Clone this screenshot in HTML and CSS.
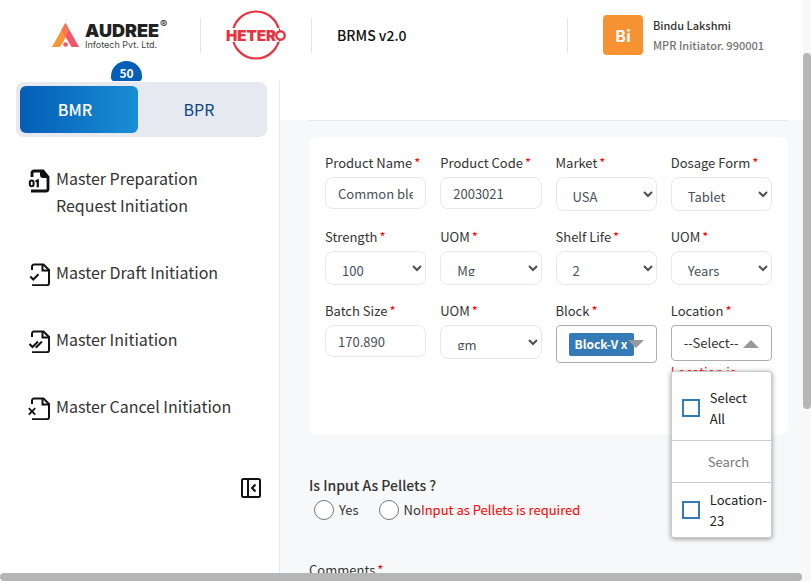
FILE: index.html
```html
<!DOCTYPE html>
<html lang="en">
<head>
<meta charset="utf-8">
<title>BRMS v2.0</title>
<link rel="stylesheet" href="styles.css">
</head>
<body>
<svg class="defs" aria-hidden="true">
  <symbol id="page" viewBox="0 0 24 24">
    <path d="M4 8V4.500a2 2 0 0 1 2-2h9.500L21 8v13.200a2 2 0 0 1-2 2H4" fill="none" stroke="#111" stroke-width="2"/>
    <path d="M14.500 3v5.500H21" fill="none" stroke="#111" stroke-width="2"/>
  </symbol>
</svg>
<div class="app">
  <header class="header">
    <div class="audree">
      <svg class="audree-mark" width="28" height="24" viewBox="0 0 28 24" aria-hidden="true">
        <path d="M13.500 0 0 24h8l9-15z" fill="#f79433"/>
        <path d="M13.500 0 27 24h-7.500L9.500 7z" fill="#f2566b"/>
        <path d="M13.500 0 9.500 7 13 13 17 8z" fill="#f57850"/>
        <circle cx="13.500" cy="21.500" r="2.300" fill="#f2566b"/>
      </svg>
      <div class="audree-words">
        <div class="audree-name">AUDREE<sup>®</sup></div>
        <div class="audree-sub">Infotech Pvt. Ltd.</div>
      </div>
    </div>
    <div class="hetero">
      <svg width="62" height="52" viewBox="0 0 62 52" role="img" aria-label="Hetero">
        <circle cx="31" cy="26" r="23.500" fill="none" stroke="#e8323e" stroke-width="2.200"/>
        <path d="M0 19h54v14H0z" fill="#fff"/>
        <text x="1" y="31.500" class="hetero-text">HETER</text>
        <circle cx="55.500" cy="26.500" r="4.200" fill="#fff" stroke="#e8323e" stroke-width="2.400"/>
      </svg>
    </div>
    <div class="title">BRMS v2.0</div>
    <div class="user">
      <div class="avatar">Bi</div>
      <div>
        <div class="user-name">Bindu Lakshmi</div>
        <div class="user-role">MPR Initiator. 990001</div>
      </div>
    </div>
  </header>

  <div class="body">
    <aside class="sidebar">
      <div class="tabs">
        <button class="tab active" type="button">BMR</button>
        <button class="tab" type="button">BPR</button>
        <span class="badge">50</span>
      </div>
      <nav class="nav">
        <a href="#preparation">
          <svg viewBox="0 0 24 24" aria-hidden="true">
            <path d="M4 9V5a2 2 0 0 1 2-2h9l5 6v12a2 2 0 0 1-2 2H3" fill="none" stroke="#111" stroke-width="2.800"/>
            <path d="M12 2h4l5.500 8H15a3 3 0 0 1-3-3z" fill="#111"/>
            <rect x="1.800" y="12.600" width="3.800" height="5.600" rx="1.900" fill="none" stroke="#111" stroke-width="2"/>
            <path d="M7.500 13.500 9.800 12.500V19.300" fill="none" stroke="#111" stroke-width="2.200"/>
          </svg>
          <span>Master Preparation Request Initiation</span>
        </a>
        <a href="#draft">
          <svg viewBox="0 0 24 24" aria-hidden="true"><use href="#page"/><path d="M2.300 14.500l3 3 5.200-5.200" fill="none" stroke="#111" stroke-width="2"/></svg>
          <span>Master Draft Initiation</span>
        </a>
        <a href="#initiation">
          <svg viewBox="0 0 24 24" aria-hidden="true"><use href="#page"/><path d="M1.500 15l3 3 5.500-5.500M7.500 18l1 0 5.500-5.500" fill="none" stroke="#111" stroke-width="2"/></svg>
          <span>Master Initiation</span>
        </a>
        <a href="#cancel">
          <svg viewBox="0 0 24 24" aria-hidden="true"><use href="#page"/><path d="M.8 12.200l6.400 6.400M7.200 12.200.8 18.600" fill="none" stroke="#111" stroke-width="1.800"/></svg>
          <span>Master Cancel Initiation</span>
        </a>
      </nav>
      <button class="collapse" type="button" aria-label="Collapse menu">
        <svg width="20" height="20" viewBox="0 0 20 20" fill="none" stroke="#111" stroke-width="2" aria-hidden="true"><rect x="1" y="1" width="18" height="18" rx="1.500"/><path d="M7 1v18M14.500 6.500 11 10l3.500 3.500"/></svg>
      </button>
    </aside>

    <main class="main">
      <div class="toolbar"></div>
      <form class="form">
        <div class="card">
          <div class="field"><label for="name">Product Name<i>*</i></label><input id="name" type="text" value="Common blend"></div>
          <div class="field"><label for="code">Product Code<i>*</i></label><input id="code" type="text" value="2003021"></div>
          <div class="field"><label for="market">Market<i>*</i></label><select id="market"><option>USA</option></select></div>
          <div class="field"><label for="dosage">Dosage Form<i>*</i></label><select id="dosage"><option>Tablet</option></select></div>
          <div class="field"><label for="strength">Strength<i>*</i></label><select id="strength"><option>100</option></select></div>
          <div class="field"><label for="uom1">UOM<i>*</i></label><select id="uom1"><option>Mg</option></select></div>
          <div class="field"><label for="shelf">Shelf Life<i>*</i></label><select id="shelf"><option>2</option></select></div>
          <div class="field"><label for="uom2">UOM<i>*</i></label><select id="uom2"><option>Years</option></select></div>
          <div class="field"><label for="batch">Batch Size<i>*</i></label><input id="batch" type="text" value="170.890"></div>
          <div class="field"><label for="uom3">UOM<i>*</i></label><select id="uom3"><option>gm</option></select></div>
          <div class="field">
            <label for="block">Block<i>*</i></label>
            <button id="block" class="multi tall" type="button"><span class="chip">Block-V x</span><span class="caret down"></span></button>
          </div>
          <div class="field">
            <label for="location">Location<i>*</i></label>
            <div class="picker">
              <button id="location" class="multi" type="button">--Select--<span class="caret up"></span></button>
              <div class="menu">
                <label class="option all"><input type="checkbox"><span>Select All</span></label>
                <input class="search" type="text" placeholder="Search" aria-label="Search">
                <label class="option"><input type="checkbox"><span>Location-23</span></label>
              </div>
            </div>
            <div class="error">Location is required</div>
          </div>
        </div>

        <fieldset class="pellets">
          <legend>Is Input As Pellets ?</legend>
          <div class="choices">
            <label><input type="radio" name="pellets">Yes</label>
            <label><input type="radio" name="pellets">No</label><span class="error">Input as Pellets is required</span>
          </div>
        </fieldset>
        <div class="comments"><label for="comments">Comments<i>*</i></label><textarea id="comments"></textarea></div>
      </form>
    </main>
  </div>
  <div class="vbar"></div>
  <div class="hbar"></div>
</div>
</body>
</html>
```
FILE: styles.css
```css
* { box-sizing: border-box; }
body {
  margin: 0;
  font-family: "Noto Sans CJK JP", "Noto Sans", sans-serif;
  font-size: 13px;
  line-height: 20px;
  color: #333;
}
button, input, select, textarea { font: inherit; color: inherit; }
.defs { position: absolute; width: 0; height: 0; }
.app {
  position: relative;
  display: flex;
  flex-direction: column;
  height: 100vh;
  overflow: hidden;
  background: #f7f8fa;
}

/* Header */
.header {
  display: flex;
  align-items: center;
  height: 81px;
  padding: 0 39px 11px 52px;
  margin-right: 8px;
  background: #fff;
}
.audree { display: flex; align-items: center; gap: 5px; width: 148px; }
.audree-words { padding-top: 3px; font-family: Inter, sans-serif; color: #222; white-space: nowrap; }
.audree-name { display: flex; gap: 1px; font-size: 18px; font-weight: 900; line-height: 16px; }
.audree-name sup { margin-top: -3px; font-size: 11px; font-weight: 500; line-height: 8px; vertical-align: top; }
.audree-sub { font-size: 9px; line-height: 12px; color: #444; }
.hetero, .title, .user { display: flex; align-items: center; height: 35px; border-left: 1px solid #e3e5e8; }
.hetero { width: 111px; padding-left: 24px; flex: none; }
.hetero svg { flex: none; }
.hetero-text { font: 900 15px Inter, sans-serif; fill: #e8323e; }
.title { flex: 1; padding-left: 25px; font-size: 14px; font-weight: 500; color: #111; }
.user { gap: 10px; padding-left: 35px; font-weight: 500; font-size: 11px; white-space: nowrap; }
.avatar {
  display: grid;
  place-items: center;
  width: 40px;
  height: 40px;
  border-radius: 4px;
  background: #f79233;
  color: #fff;
  font-size: 16px;
  font-weight: 700;
}
.user-role { color: #737373; }

/* Sidebar */
.body { display: flex; flex: 1; min-height: 0; }
.sidebar {
  display: flex;
  flex-direction: column;
  flex: none;
  width: 280px;
  padding: 1px 12px 0 16px;
  background: #fff;
  border-right: 1px solid #e5e7ec;
}
.tabs {
  position: relative;
  display: grid;
  grid-template-columns: 1fr 1fr;
  gap: 2px;
  height: 55px;
  padding: 4px 9px 4px 4px;
  border-radius: 8px;
  background: #e6e9ef;
}
.tab {
  padding: 0 0 2px;
  border: 0;
  border-radius: 6px;
  background: none;
  font-size: 16px;
  color: #0d4588;
}
.tab.active { padding-right: 8px; background: linear-gradient(90deg, #045db6, #1a8ed4); color: #fff; font-weight: 500; }
.badge {
  position: absolute;
  left: 95px;
  top: -21px;
  width: 31px;
  height: 20px;
  padding-top: 2px;
  border-radius: 16px 16px 4px 4px;
  background: #045db6;
  color: #fff;
  font-size: 12px;
  font-weight: 700;
  text-align: center;
}
.nav { display: flex; flex-direction: column; gap: 40px; padding: 28px 32px 0 12px; }
.nav a { display: flex; gap: 4px; color: #333; font-size: 16px; line-height: 27px; text-decoration: none; }
.nav svg { flex: none; width: 24px; height: 24px; margin-top: 3px; overflow: visible; }
.collapse { align-self: flex-end; display: flex; margin: 58px 6px 0 0; padding: 0; border: 0; background: none; }

/* Form */
.main { flex: 1; min-width: 0; margin-right: 8px; }
.toolbar { height: 39px; background: #fff; }
.form { padding: 0 15px 0 29px; }
.form::before { content: ""; display: block; height: 17px; border-top: 1px solid #e5e8ee; margin-bottom: -1px; }
.card {
  display: grid;
  grid-template-columns: repeat(4, minmax(0, 1fr));
  gap: 16px 14px;
  padding: 16px 16px 32px;
  border-radius: 8px;
  background: #fff;
}
.field > label { display: block; margin-bottom: 4px; white-space: nowrap; }
i { margin-left: 2px; color: red; font-style: normal; }
.field > input, .field > select {
  display: block;
  width: 100%;
  height: 32px;
  padding: 6px 12px;
  border: 1px solid #e6e8ec;
  border-radius: 8px;
  background: #fff;
  color: #495057;
}
.field > select { height: 34px; padding: 8px 0 8px 12px; }
.multi {
  position: relative;
  display: flex;
  align-items: center;
  width: 100%;
  height: 36px;
  padding: 0 12px;
  border: 1px solid #adadad;
  border-radius: 4px;
  background: #fff;
  text-align: left;
}
.multi.tall { height: 38px; }
.chip {
  padding: 1px 6px 2px;
  border-radius: 2px;
  background: #337ab7;
  color: #fff;
  font-size: 12px;
  font-weight: 700;
  white-space: nowrap;
}
.caret { position: absolute; right: 12px; top: 14px; border: solid transparent; border-width: 0 8px; }
.caret.down { border-top: 8px solid #999; }
.caret.up { border-bottom: 8px solid #999; }
.error { color: red; line-height: 21px; }
.picker { position: relative; }
.menu {
  position: absolute;
  top: 100%;
  left: 0;
  z-index: 1;
  width: 100%;
  margin-top: 10px;
  border: 1px solid #ccc;
  border-radius: 3px;
  background: #fff;
  box-shadow: 0 1px 5px #959595;
  color: #222;
}
.option { display: flex; align-items: center; gap: 10px; padding: 6px 4px 6px 10px; line-height: 21px; }
.option.all { padding: 15px 16px 11px 10px; }
.option input {
  appearance: none;
  flex: none;
  width: 18px;
  height: 18px;
  margin: 0;
  border: 2px solid #337ab7;
  background: #fff;
}
.search {
  display: block;
  width: 100%;
  height: 43px;
  padding: 0 0 0 36px;
  border: solid #ccc;
  border-width: 1px 0;
  background: none;
}
.search::placeholder { color: #757575; }
.pellets { margin: 38px 0 0; padding: 0; border: 0; }
.pellets legend { padding: 0; font-size: 14px; font-weight: 500; line-height: 24px; }
.choices { display: flex; align-items: center; padding: 2px 0 0 5px; }
.choices label { display: flex; align-items: center; gap: 5px; }
.choices label + label { margin-left: 20px; }
.choices input { appearance: none; width: 20px; height: 20px; margin: 0; border: 1px solid #767676; border-radius: 50%; background: #fff; }
.comments { margin-top: 40px; }
.comments label, .comments textarea { display: block; }
.comments textarea { width: 100%; margin-top: 4px; }

/* Scroll thumbs */
.vbar, .hbar { position: absolute; border-radius: 4px; background: #b5b7b6; }
.vbar { right: 0; top: 53px; width: 8px; height: 356px; }
.hbar { left: 0; right: 9px; bottom: 0; height: 8px; }
```
